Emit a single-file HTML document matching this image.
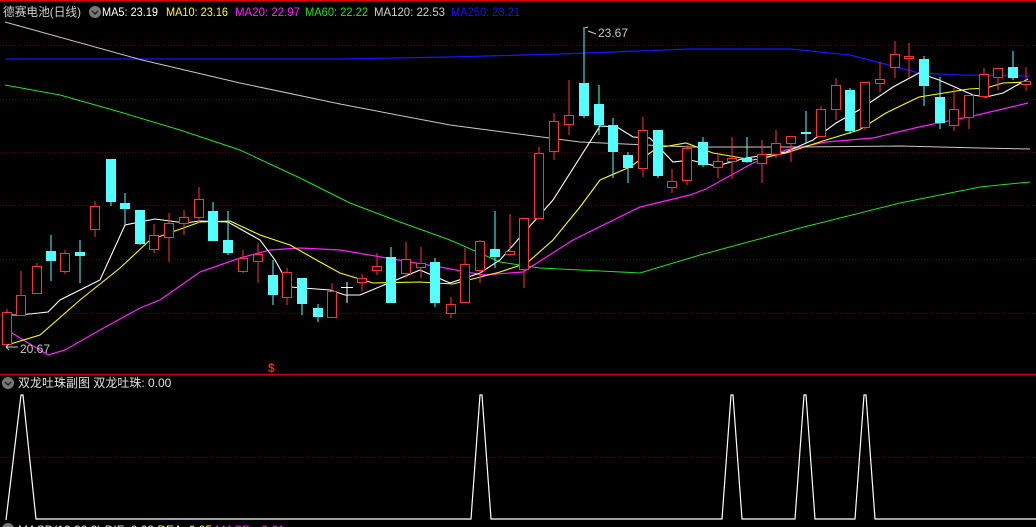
<!DOCTYPE html>
<html><head><meta charset="utf-8"><style>
html,body{margin:0;padding:0;background:#000;width:1036px;height:527px;overflow:hidden}
svg{display:block}
text{font-family:"Liberation Sans","Noto Sans CJK SC",sans-serif;font-size:12px}
.r line{stroke:#ff3232;stroke-width:1}
.r rect{fill:#000;stroke:#ff3232;stroke-width:1}
.c line{stroke:#54ffff;stroke-width:1}
.c rect{fill:#54ffff;stroke:none}
.g{stroke:#5a0000;stroke-dasharray:1 2;stroke-width:1}
</style></head><body>
<svg width="1036" height="527" viewBox="0 0 1036 527" xmlns="http://www.w3.org/2000/svg">
<rect x="0" y="0" width="1036" height="1.5" fill="#d00"/>
<line class="g" x1="0" x2="1036" y1="45.5" y2="45.5"/>
<line class="g" x1="0" x2="1036" y1="99.5" y2="99.5"/>
<line class="g" x1="0" x2="1036" y1="152.5" y2="152.5"/>
<line class="g" x1="0" x2="1036" y1="205.5" y2="205.5"/>
<line class="g" x1="0" x2="1036" y1="259.5" y2="259.5"/>
<line class="g" x1="0" x2="1036" y1="313.5" y2="313.5"/>
<line class="g" x1="0" x2="1036" y1="457.5" y2="457.5"/>
<line x1="0" x2="1036" y1="374.5" y2="374.5" stroke="#c00" stroke-width="1.5"/>

<polyline fill="none" stroke="#1515ff" stroke-width="1.3" points="5,59 150,59 340,59 450,57 560,54 690,49 790,49 850,55 919,73 960,75 1030,76"/>
<polyline fill="none" stroke="#c8c8c8" stroke-width="1" points="5,22 142,60 240,83 340,104 450,125 580,142 690,147 800,147 900,146 980,148 1030,149"/>
<polyline fill="none" stroke="#20e020" stroke-width="1" points="5,85 60,95 120,112 180,130 240,150 300,178 350,203 400,222 450,240 500,262 540,268 640,273 700,255 800,228 900,203 980,187 1030,182"/>
<polyline fill="none" stroke="#ff20ff" stroke-width="1.2" points="7,330 48,355 65,350 100,330 140,308 160,300 200,272 240,258 270,250 300,248 340,250 440,267 483,275 523,272 573,240 640,207 690,195 706,189 753,163 786,150 826,142 873,138 919,127 973,116 1028,103"/>
<polyline fill="none" stroke="#ffff00" stroke-width="1.1" points="7,345 40,335 80,300 120,268 150,240 200,222 230,221 260,235 290,245 320,262 340,273 373,283 420,282 453,284 500,272 527,263 553,240 580,207 600,180 630,167 657,148 686,143 713,153 753,160 786,153 826,140 859,130 886,113 919,97 969,89 986,88 1003,83 1028,82"/>
<polyline fill="none" stroke="#ffffff" stroke-width="1.1" points="7,315 20,315 48,312 60,300 100,280 125,225 155,219 185,223 200,221 228,222 260,240 275,260 290,287 330,290 345,295 360,295 420,270 450,283 480,273 500,260 553,200 600,126 617,127 633,137 650,138 673,162 690,160 716,166 746,158 786,152 813,140 836,123 859,110 893,87 919,73 939,80 973,95 986,97 1003,93 1028,79"/>

<g class="r">
<line x1="7" x2="7" y1="309" y2="347"/><rect x="2.5" y="312.5" width="9" height="32"/>
<line x1="21" x2="21" y1="271" y2="315"/><rect x="16.5" y="295.5" width="9" height="20"/>
<line x1="37" x2="37" y1="263" y2="293"/><rect x="32.5" y="266.5" width="9" height="27"/>
<line x1="65" x2="65" y1="250" y2="274"/><rect x="60.5" y="253.5" width="9" height="18"/>
<line x1="95" x2="95" y1="201" y2="237"/><rect x="90.5" y="206.5" width="9" height="23"/>
<line x1="154" x2="154" y1="224" y2="253"/><rect x="149.5" y="235.5" width="9" height="14"/>
<line x1="169" x2="169" y1="213" y2="262"/><rect x="164.5" y="223.5" width="9" height="14"/>
<line x1="184" x2="184" y1="210" y2="235"/><rect x="179.5" y="217.5" width="9" height="6"/>
<line x1="199" x2="199" y1="187" y2="223"/><rect x="194.5" y="199.5" width="9" height="18"/>
<line x1="243" x2="243" y1="250" y2="273"/><rect x="238.5" y="258.5" width="9" height="13"/>
<line x1="258" x2="258" y1="243" y2="283"/><rect x="253.5" y="254.5" width="9" height="7"/>
<line x1="287" x2="287" y1="268" y2="305"/><rect x="282.5" y="272.5" width="9" height="25"/>
<line x1="332" x2="332" y1="283" y2="317"/><rect x="327.5" y="291.5" width="9" height="26"/>
<line x1="362" x2="362" y1="274" y2="291"/><rect x="357.5" y="278.5" width="9" height="4"/>
<line x1="377" x2="377" y1="253" y2="275"/><rect x="372.5" y="266.5" width="9" height="4"/>
<line x1="406" x2="406" y1="242" y2="278"/><rect x="401.5" y="259.5" width="9" height="14"/>
<line x1="421" x2="421" y1="247" y2="278"/><rect x="416.5" y="263.5" width="9" height="4"/>
<line x1="451" x2="451" y1="297" y2="318"/><rect x="446.5" y="304.5" width="9" height="9"/>
<line x1="465" x2="465" y1="248" y2="302"/><rect x="460.5" y="264.5" width="9" height="38"/>
<line x1="480" x2="480" y1="240" y2="283"/><rect x="475.5" y="241.5" width="9" height="29"/>
<line x1="510" x2="510" y1="214" y2="256"/><rect x="505.5" y="251.5" width="9" height="3"/>
<line x1="524" x2="524" y1="218" y2="288"/><rect x="519.5" y="218.5" width="9" height="51"/>
<line x1="539" x2="539" y1="147" y2="218"/><rect x="534.5" y="153.5" width="9" height="65"/>
<line x1="554" x2="554" y1="113" y2="160"/><rect x="549.5" y="121.5" width="9" height="30"/>
<line x1="569" x2="569" y1="80" y2="135"/><rect x="564.5" y="115.5" width="9" height="9"/>
<line x1="643" x2="643" y1="117" y2="177"/><rect x="638.5" y="130.5" width="9" height="38"/>
<line x1="672" x2="672" y1="169" y2="193"/><rect x="667.5" y="181.5" width="9" height="6"/>
<line x1="687" x2="687" y1="145" y2="185"/><rect x="682.5" y="148.5" width="9" height="32"/>
<line x1="718" x2="718" y1="154" y2="178"/><rect x="713.5" y="161.5" width="9" height="6"/>
<line x1="732" x2="732" y1="137" y2="179"/><rect x="727.5" y="158.5" width="9" height="3"/>
<line x1="762" x2="762" y1="140" y2="183"/><rect x="757.5" y="154.5" width="9" height="9"/>
<line x1="776" x2="776" y1="130" y2="158"/><rect x="771.5" y="143.5" width="9" height="11"/>
<line x1="791" x2="791" y1="136" y2="162"/><rect x="786.5" y="136.5" width="9" height="7"/>
<line x1="821" x2="821" y1="106" y2="136"/><rect x="816.5" y="109.5" width="9" height="27"/>
<line x1="836" x2="836" y1="78" y2="120"/><rect x="831.5" y="85.5" width="9" height="24"/>
<line x1="865" x2="865" y1="82" y2="130"/><rect x="860.5" y="82.5" width="9" height="45"/>
<line x1="880" x2="880" y1="62" y2="92"/><rect x="875.5" y="79.5" width="9" height="4"/>
<line x1="895" x2="895" y1="41" y2="78"/><rect x="890.5" y="54.5" width="9" height="13"/>
<line x1="909" x2="909" y1="43" y2="78"/><rect x="904.5" y="56.5" width="9" height="2"/>
<line x1="954" x2="954" y1="88" y2="131"/><rect x="949.5" y="109.5" width="9" height="16"/>
<line x1="969" x2="969" y1="95" y2="129"/><rect x="964.5" y="95.5" width="9" height="22"/>
<line x1="984" x2="984" y1="68" y2="96"/><rect x="979.5" y="74.5" width="9" height="22"/>
<line x1="998" x2="998" y1="68" y2="90"/><rect x="993.5" y="68.5" width="9" height="9"/>
<line x1="1026" x2="1026" y1="67" y2="91"/><rect x="1021.5" y="81.5" width="9" height="3"/>
</g>
<g class="c">
<line x1="51" x2="51" y1="235" y2="281"/><rect x="46" y="251" width="10" height="10"/>
<line x1="80" x2="80" y1="240" y2="283"/><rect x="75" y="252" width="10" height="4"/>
<line x1="111" x2="111" y1="159" y2="206"/><rect x="106" y="159" width="10" height="43"/>
<line x1="125" x2="125" y1="193" y2="225"/><rect x="120" y="203" width="10" height="6"/>
<line x1="140" x2="140" y1="210" y2="245"/><rect x="135" y="210" width="10" height="34"/>
<line x1="213" x2="213" y1="202" y2="241"/><rect x="208" y="211" width="10" height="30"/>
<line x1="228" x2="228" y1="211" y2="255"/><rect x="223" y="240" width="10" height="13"/>
<line x1="273" x2="273" y1="260" y2="305"/><rect x="268" y="275" width="10" height="20"/>
<line x1="302" x2="302" y1="278" y2="315"/><rect x="297" y="278" width="10" height="26"/>
<line x1="318" x2="318" y1="304" y2="322"/><rect x="313" y="308" width="10" height="9"/>
<line x1="391" x2="391" y1="247" y2="301"/><rect x="386" y="257" width="10" height="46"/>
<line x1="435" x2="435" y1="258" y2="307"/><rect x="430" y="262" width="10" height="41"/>
<line x1="495" x2="495" y1="211" y2="268"/><rect x="490" y="249" width="10" height="8"/>
<line x1="584" x2="584" y1="27" y2="118"/><rect x="579" y="83" width="10" height="33"/>
<line x1="599" x2="599" y1="85" y2="135"/><rect x="594" y="104" width="10" height="21"/>
<line x1="613" x2="613" y1="118" y2="178"/><rect x="608" y="125" width="10" height="27"/>
<line x1="628" x2="628" y1="152" y2="183"/><rect x="623" y="155" width="10" height="13"/>
<line x1="658" x2="658" y1="130" y2="178"/><rect x="653" y="130" width="10" height="46"/>
<line x1="703" x2="703" y1="137" y2="167"/><rect x="698" y="142" width="10" height="23"/>
<line x1="747" x2="747" y1="137" y2="163"/><rect x="742" y="158" width="10" height="4"/>
<line x1="806" x2="806" y1="111" y2="143"/><rect x="801" y="132" width="10" height="2"/>
<line x1="850" x2="850" y1="88" y2="134"/><rect x="845" y="90" width="10" height="41"/>
<line x1="924" x2="924" y1="56" y2="106"/><rect x="919" y="59" width="10" height="27"/>
<line x1="940" x2="940" y1="77" y2="129"/><rect x="935" y="97" width="10" height="26"/>
<line x1="1013" x2="1013" y1="51" y2="80"/><rect x="1008" y="67" width="10" height="11"/>
</g>
<g stroke="#fff"><line x1="347" x2="347" y1="282" y2="303"/><line x1="341" x2="353" y1="287.5" y2="287.5"/></g>

<text x="3" y="16" fill="#d0d0d0" font-size="13" textLength="78" lengthAdjust="spacingAndGlyphs">德赛电池(日线)</text>
<circle cx="95" cy="12" r="6" fill="#777"/><path d="M92 11 L95 14 L98 11" stroke="#222" stroke-width="1.5" fill="none"/>
<text x="102" y="16" fill="#fff" textLength="56" lengthAdjust="spacingAndGlyphs">MA5: 23.19</text>
<text x="166" y="16" fill="#ffff00" textLength="62" lengthAdjust="spacingAndGlyphs">MA10: 23.16</text>
<text x="235" y="16" fill="#ff20ff" textLength="65" lengthAdjust="spacingAndGlyphs">MA20: 22.97</text>
<text x="305" y="16" fill="#20e020" textLength="63" lengthAdjust="spacingAndGlyphs">MA60: 22.22</text>
<text x="374" y="16" fill="#d0d0d0" textLength="71" lengthAdjust="spacingAndGlyphs">MA120: 22.53</text>
<text x="451" y="16" fill="#1515ff" textLength="69" lengthAdjust="spacingAndGlyphs">MA250: 23.21</text>
<text x="598" y="37" fill="#c8c8c8">23.67</text>
<path d="M585 28 L588 27 M588 31 L596 34" stroke="#ccc" fill="none"/>
<text x="20" y="353" fill="#c8c8c8">20.67</text>
<path d="M6 347 L18 347 M6 347 L9 344 M6 347 L9 350" stroke="#ccc" fill="none"/>
<text x="268" y="372" fill="#ff2020" font-size="11" font-weight="bold">$</text>

<circle cx="8" cy="383" r="6" fill="#777"/><path d="M5 382 L8 385 L11 382" stroke="#222" stroke-width="1.5" fill="none"/>
<text x="18" y="387" fill="#e0e0e0">双龙吐珠副图 双龙吐珠: 0.00</text>
<polyline fill="none" stroke="#fff" stroke-width="1.2" points="6,520 21,395 23,395 36,519 471,519 480,395 482,395 491,519 722,519 731,395 733,395 742,519 795,519 804,395 806,395 815,519 855,519 864,395 866,395 875,519 1036,519"/>
<circle cx="8" cy="529" r="6" fill="#777"/>
<text x="18" y="534" fill="#e0e0e0">MACD(12,26,9) DIF: 0.00 <tspan fill="#ffff00">DEA: 0.05</tspan> <tspan fill="#ff20ff">MACD: -0.01</tspan></text>
</svg>
</body></html>
